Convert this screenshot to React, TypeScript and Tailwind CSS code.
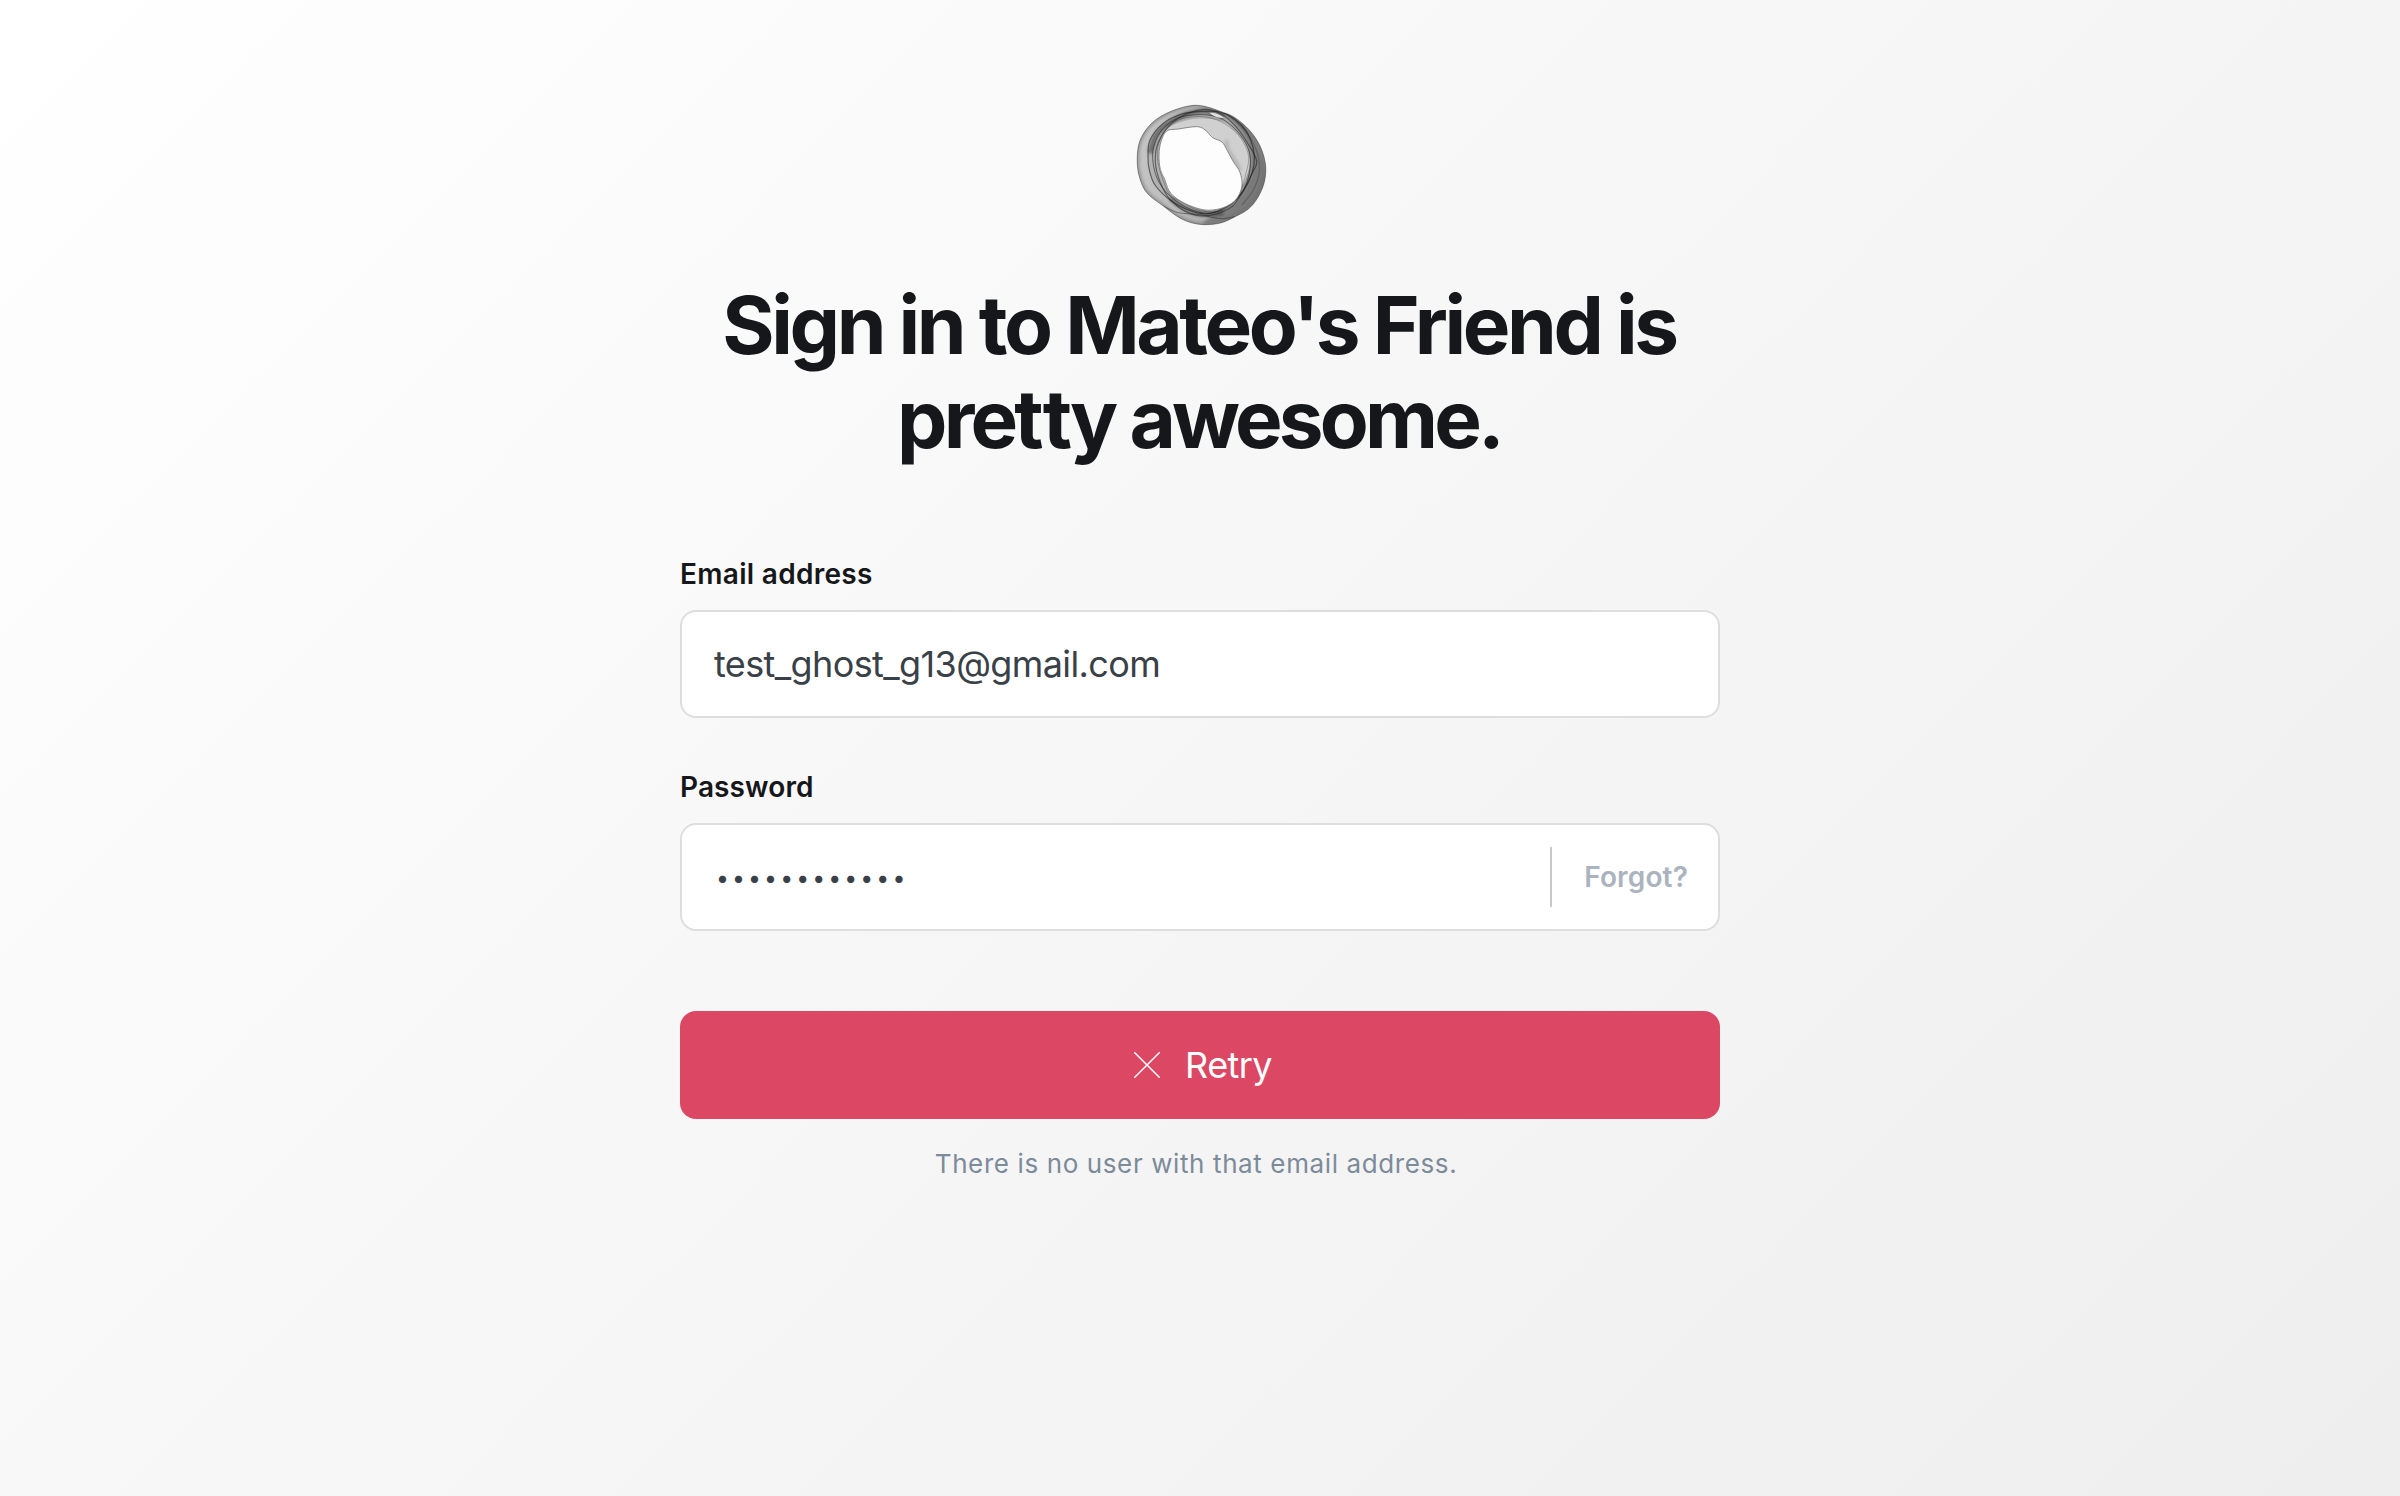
type Pt = [number, number];

/** Builds a smooth path through the points (Catmull-Rom turned into Béziers). */
function smooth(p: Pt[], closed: boolean): string {
  const n = p.length;
  const at = (i: number): Pt => (closed ? p[(i + n) % n] : p[Math.max(0, Math.min(n - 1, i))]);
  let d = `M${p[0][0]} ${p[0][1]}`;
  const last = closed ? n : n - 1;
  for (let i = 0; i < last; i++) {
    const [a, b, c, e] = [at(i - 1), at(i), at(i + 1), at(i + 2)];
    d += `C${b[0] + (c[0] - a[0]) / 6} ${b[1] + (c[1] - a[1]) / 6} ${c[0] - (e[0] - b[0]) / 6} ${c[1] - (e[1] - b[1]) / 6} ${c[0]} ${c[1]}`;
  }
  return closed ? d + "Z" : d;
}

const outer: Pt[] = [[222, 46], [262, 51], [300, 64], [340, 80], [378, 110], [405, 142], [426, 182], [437, 230], [432, 280], [412, 325], [384, 358], [345, 380], [305, 398], [255, 404], [210, 397], [170, 378], [130, 348], [88, 316], [67, 286], [53, 235], [54, 175], [68, 135], [95, 100], [130, 75], [175, 56]];
const hole: Pt[] = [[140, 123], [175, 117], [232, 110], [258, 122], [278, 143], [306, 156], [322, 182], [340, 215], [360, 247], [366, 285], [355, 318], [335, 340], [300, 356], [255, 360], [205, 345], [165, 322], [146, 300], [134, 268], [121, 238], [117, 195], [123, 155]];
const loopA: Pt[] = [[84, 200], [90, 150], [130, 100], [185, 72], [245, 64], [300, 66], [345, 88], [380, 125], [400, 175], [402, 225], [384, 280], [352, 325], [305, 358], [255, 372], [200, 358], [150, 330], [105, 285], [88, 240]];
const loopB: Pt[] = [[98, 205], [104, 160], [130, 115], [175, 84], [230, 74], [290, 80], [336, 108], [370, 148], [390, 195], [388, 250], [370, 300], [332, 344], [282, 368], [235, 366], [185, 344], [140, 308], [110, 262]];
const loopC: Pt[] = [[106, 215], [114, 160], [150, 104], [205, 70], [260, 58], [308, 74], [348, 110], [380, 155], [410, 212], [396, 250], [368, 306], [338, 348], [300, 368], [250, 378], [200, 366], [150, 328], [120, 275]];
const loopD: Pt[] = [[112, 200], [120, 150], [160, 98], [220, 80], [280, 86], [330, 112], [366, 150], [386, 200], [378, 250], [366, 290], [350, 328], [306, 362], [240, 362], [185, 336], [148, 312], [124, 255]];
const veil: Pt[] = [[135, 126], [160, 105], [205, 90], [260, 86], [310, 96], [350, 128], [378, 165], [389, 210], [383, 250], [367, 285], [360, 247], [340, 215], [322, 182], [306, 156], [278, 143], [258, 122], [232, 110], [175, 117]];
const darkRight: Pt[] = [[320, 72], [350, 88], [390, 125], [418, 175], [434, 230], [430, 280], [410, 325], [380, 358], [340, 380], [300, 396], [250, 402], [275, 378], [330, 352], [365, 310], [392, 255], [395, 190], [370, 130]];
const ringPath = smooth(outer, true) + smooth(hole, true);

/** Ring of overlapping translucent bands. */
function RingLogo() {
  return (
    <svg viewBox="0 0 480 450" className="block h-[150px] w-[160px]" aria-hidden="true">
      <defs>
        <linearGradient id="ring" x1="0" y1="0.2" x2="1" y2="0.6">
          <stop offset="0" stopColor="#c6c6c6" />
          <stop offset="0.5" stopColor="#bcbcbc" />
          <stop offset="1" stopColor="#9c9c9c" />
        </linearGradient>
        <filter id="soft" x="-20%" y="-20%" width="140%" height="140%">
          <feGaussianBlur stdDeviation="5" />
        </filter>
        <clipPath id="ringClip">
          <path d={ringPath} clipRule="evenodd" />
        </clipPath>
      </defs>
      <path d={ringPath} fillRule="evenodd" fill="url(#ring)" />
      <g clipPath="url(#ringClip)" fill="none">
        <path d={smooth(outer, true)} stroke="#444" strokeWidth="12" opacity="0.35" filter="url(#soft)" />
        <path d={smooth(darkRight, true)} fill="#444" opacity="0.42" filter="url(#soft)" />
        <path d={smooth(loopA, true)} fill="#000" opacity="0.08" />
        <path d={smooth([[90, 190], [108, 136], [150, 96], [200, 72], [255, 64], [310, 80]], false)} stroke="#222" strokeWidth="15" opacity="0.5" filter="url(#soft)" />
        <path d={smooth([[150, 326], [200, 360], [260, 374], [310, 368]], false)} stroke="#222" strokeWidth="14" opacity="0.45" filter="url(#soft)" />
        <path d={smooth(veil, true)} fill="#d0d0d0" />
        <path d={smooth([[320, 150], [322, 175], [340, 205], [360, 240]], false)} stroke="#777" strokeWidth="12" opacity="0.3" filter="url(#soft)" />
        <g stroke="#1c1c1c">
          <path d={smooth(loopA, true)} strokeWidth="3.5" opacity="0.6" />
          <path d={smooth(loopB, true)} strokeWidth="3" opacity="0.55" />
          <path d={smooth(loopC, true)} strokeWidth="3.5" opacity="0.55" />
          <path d={smooth(loopD, true)} strokeWidth="2.5" opacity="0.35" />
          <path d={smooth([[130, 348], [175, 368], [240, 374], [300, 386], [345, 380]], false)} strokeWidth="3" opacity="0.45" />
          <path d={smooth([[310, 68], [350, 96], [385, 135], [412, 190], [418, 245], [400, 300], [366, 345]], false)} strokeWidth="4" opacity="0.25" />
        </g>
        <path d="M268 68C285 67 302 73 312 84C296 85 280 79 268 68Z" fill="#dedede" />
      </g>
      <path d={smooth(outer, true)} fill="none" stroke="#333" strokeWidth="3" opacity="0.5" />
      <path d={smooth(hole, true)} fill="#fdfdfd" stroke="#777" strokeWidth="2.5" />
    </svg>
  );
}

export default function App() {
  return (
    <main className="flex h-[1496px] w-full flex-col items-center bg-[linear-gradient(135deg,#ffffff_0%,#f6f6f6_50%,#eeeeee_100%)] pt-[90px] font-['Inter',sans-serif]">
      <RingLogo />
      <h1 className="mt-[38px] w-[1040px] pr-[2px] text-center text-[80px] leading-[94px] font-bold tracking-[-3.4px] text-[#15171a]">
        Sign in to Mateo's Friend is
        <br />
        <span className="tracking-[-3.85px]">
          pre<span className="tracking-[-0.8px]">t</span>ty awesome.
        </span>
      </h1>
      <form className="mt-[90px] flex w-[1040px] flex-col">
        <label className="text-[28px] leading-[36px] font-semibold tracking-[0.3px] text-[#15171a]">Email address</label>
        <div className="mt-[18px] flex h-[108px] items-center rounded-[16px] border-2 border-[#dddede] bg-white px-8 text-[36px] tracking-[-0.61px] text-[#394047]">
          test_ghost_g13@gmail.com
        </div>
        <label className="mt-[51px] text-[28px] leading-[36px] font-semibold tracking-[0.1px] text-[#15171a]">Password</label>
        <div className="mt-[18px] flex h-[108px] items-center justify-between rounded-[16px] border-2 border-[#dddede] bg-white pr-[30px] pl-[34px]">
          <span className="pt-[3px] text-[23px] tracking-[3.1px] text-[#394047]">••••••••••••</span>
          <div className="flex h-[60px] items-center border-l-2 border-[#c8c9ca] pl-8 text-[28px] font-semibold tracking-[0.15px] text-[#abb4be]">Forgot?</div>
        </div>
        <button type="button" className="mt-[80px] flex h-[108px] items-center justify-center gap-[25px] rounded-[16px] bg-[#dc4864] pl-[6px] text-[36px] tracking-[-0.6px] text-white">
          <svg viewBox="0 0 26 26" className="size-[26px]" fill="none" stroke="currentColor" strokeWidth="1.5" strokeLinecap="round">
            <path d="M.75 .75l24.5 24.5M25.25 .75L.75 25.25" />
          </svg>
          Retry
        </button>
        <p className="mt-[27px] pr-[8px] text-center text-[26px] leading-[36px] tracking-[0.61px] text-[#7c8b9a]">There is no user with that email address.</p>
      </form>
    </main>
  );
}
